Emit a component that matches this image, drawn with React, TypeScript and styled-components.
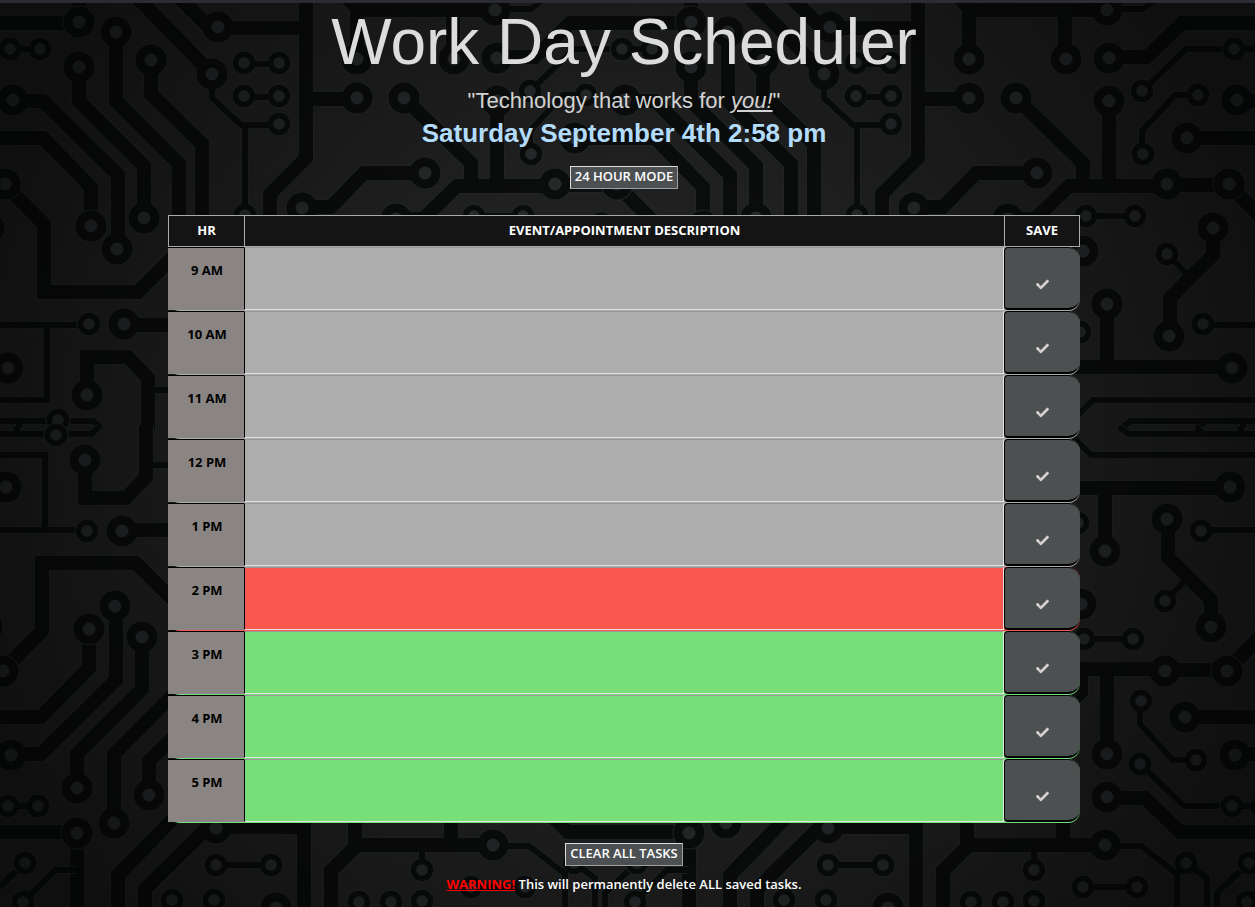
import React, { useState } from "react";
import styled, { createGlobalStyle } from "styled-components";
import { FaCheck } from "react-icons/fa";

const GlobalStyle = createGlobalStyle`
  *, *::before, *::after { box-sizing: border-box; }
  body {
    margin: 0;
    background: #141515;
    color: #ffffff;
    font-family: "Open Sans", "Noto Sans", sans-serif;
  }
`;

/* ---------- circuit board backdrop ---------- */

const TILE = 612;

const thickTraces = [
  "M497,57 H535 L570,23 H691 V-60",
  "M116,32 V101 L179,164 V250",
  "M79,67 V101 L144,166 V218",
  "M151,60 V94 L202,144 V250",
  "M13,101 H43 L118,175 V249",
  "M575,138 H655 L703,187 V226",
  "M555,185 H617 L656,224 V292 H750 L790,252",
  "M212,74 L120,-20 V-60",
  "M147,-60 V-34 L206,24 L218,28 H306",
  "M306,-60 V158 L270,194 V250",
  "M306,99 H357",
  "M333,-60 V-16 L359,10 H494",
  "M357,10 V59",
  "M453,10 V59",
  "M404,98 L471,163 V186",
  "M497,101 V186",
  "M420,222 L457,186 H555",
  "M425,173 H364 L331,207 H302",
  "M396,219 H424",
  "M601,228 V255 L558,298 V336",
  "M440,367 H620",
  "M495,304 V367",
  "M124,325 H200",
  "M87,395 V357 H128 L148,378 V430",
];

const thinTraces = [
  "M10,49 H40",
  "M530,91 L574,49 H622",
  "M244,64 H279",
  "M244,97 H279",
  "M212,80 V98 L241,125 H279",
  "M245,125 V215",
  "M424,10 V-15",
  "M494,9 H531 L567,-19 V-60",
  "M474,-32 H527",
  "M576,-8 L597,-23 V-60",
  "M639,-8 L607,-38 V-60",
  "M25,-47 L57,-15 H79",
  "M218,-10 H273",
  "M586,95 H563 L530,131 V154",
  "M475,216 H524",
  "M555,254 L580,279",
  "M455,426 L481,400 H659 V325",
  "M591,325 H701",
  "M509,428 L519,421 H705 L713,428",
  "M631,420 V428",
  "M586,428 L594,421",
  "M148,390 H200",
];

const bigPads: [number, number][] = [
  [79, 22], [116, 32], [79, 67], [151, 60], [13, 100], [144, 218], [117, 249],
  [91, 226], [5, 184], [212, 74], [218, 27], [357, 59], [454, 59], [357, 98],
  [404, 98], [495, 10], [497, 58], [497, 101], [425, 173], [302, 208], [396, 219],
  [555, 184], [575, 138], [601, 228], [471, 251], [495, 304], [557, 336],
  [620, 368], [124, 324], [87, 395], [278, -53],
];

const smallPads: [number, number][] = [
  [10, 49], [40, 49], [244, 63], [279, 63], [244, 96], [279, 96], [279, 124],
  [245, 215], [530, 91], [586, 95], [531, 154], [474, 216], [523, 216],
  [555, 254], [468, 332], [591, 324], [89, 324], [58, 420], [424, -15],
  [361, -47], [393, -47], [424, -46], [473, -32], [527, -32], [576, -8],
  [27, -8], [25, -47], [218, -10], [273, -10], [174, -45], [216, -45],
];

const EDGE = "#1e2828";
const COPPER = "#0b0c0c";
const HOLE = "#272b2c";

const BackdropSvg = styled.svg`
  grid-area: 1 / 1;
  display: block;
  width: 100%;
  height: 0;
  min-height: 100%;
`;

function Backdrop() {
  return (
    <BackdropSvg aria-hidden="true">
      <defs>
        <g id="half-board" fill="none">
          <g stroke={EDGE}>
            {thickTraces.map((d) => <path key={d} d={d} strokeWidth="16" />)}
            {thinTraces.map((d) => <path key={d} d={d} strokeWidth="8" />)}
            {bigPads.map(([x, y]) => <circle key={`${x},${y}`} cx={x} cy={y} r="11" strokeWidth="11" />)}
            {smallPads.map(([x, y]) => <circle key={`${x},${y}`} cx={x} cy={y} r="9" strokeWidth="7" />)}
          </g>
          <g stroke={COPPER}>
            {thickTraces.map((d) => <path key={d} d={d} strokeWidth="14" />)}
            {thinTraces.map((d) => <path key={d} d={d} strokeWidth="6" />)}
            {bigPads.map(([x, y]) => <circle key={`${x},${y}`} cx={x} cy={y} r="11" strokeWidth="9" fill={HOLE} />)}
            {smallPads.map(([x, y]) => <circle key={`${x},${y}`} cx={x} cy={y} r="8.5" strokeWidth="5.5" fill={HOLE} />)}
          </g>
        </g>
        <g id="board">
          <use href="#half-board" />
          <use href="#half-board" transform="translate(-2 855) scale(1 -1)" />
        </g>
        <pattern id="circuit" x="0" y="-55" width={TILE} height="960" patternUnits="userSpaceOnUse" viewBox={`0 -52 ${TILE} 960`}>
          <rect y="-52" width={TILE} height="960" fill="#212121" />
          <use href="#board" x={-TILE} />
          <use href="#board" />
          <use href="#board" x={TILE} />
        </pattern>
        <radialGradient
          id="vignette"
          cx="0.5"
          cy="0.5"
          r="0.5"
          gradientTransform="translate(-0.04 -0.3) scale(1.08 1.6)"
        >
          <stop offset="0" stopColor="#000" stopOpacity="0" />
          <stop offset="0.4" stopColor="#000" stopOpacity="0.04" />
          <stop offset="1" stopColor="#000" stopOpacity="0.54" />
        </radialGradient>
      </defs>
      <rect width="100%" height="100%" fill="url(#circuit)" />
      <rect width="100%" height="100%" fill="url(#vignette)" />
    </BackdropSvg>
  );
}

/* ---------- page ---------- */

const Page = styled.div`
  display: grid;
  grid-template-columns: minmax(0, 1fr);
  min-height: 100vh;
  border-top: 3px solid #2b2a35;
`;

const Content = styled.div`
  grid-area: 1 / 1;
  display: flex;
  flex-direction: column;
  align-items: center;
  padding: 0 7px 12px 0;
`;

const Header = styled.header`
  display: flex;
  flex-direction: column;
  align-items: center;
  text-align: center;
  font-family: "Liberation Sans", Arial, sans-serif;
`;

const Title = styled.h1`
  margin: 0;
  font-size: 64px;
  font-weight: 400;
  line-height: 78px;
  color: #dcdcdc;
`;

const Tagline = styled.p`
  margin: 0;
  font-size: 22px;
  line-height: 40px;
  color: #d3d3d3;
`;

const Emphasis = styled.em`
  text-decoration: underline;
`;

const Clock = styled.p`
  margin: 0 0 21px;
  font-size: 26px;
  font-weight: 700;
  line-height: 24px;
  color: #b3dcfa;
`;

const ActionButton = styled.button`
  height: 23px;
  padding: 0 4px 2px;
  border: 1px solid;
  border-color: #dcdcdc #a0a0a0 #a0a0a0 #dcdcdc;
  background: #4c5052;
  color: #ffffff;
  font-family: "Open Sans", "Noto Sans", sans-serif;
  font-size: 13px;
  font-weight: 600;
  line-height: 19px;
  cursor: pointer;
`;

const Schedule = styled.table`
  display: block;
  width: 100%;
  max-width: 912px;
  margin: 26px 0 20px;
  font-size: 13px;
  font-weight: 700;
`;

const Head = styled.thead`
  display: block;
`;

const Body = styled.tbody`
  display: block;
`;

const HeadRow = styled.tr`
  display: grid;
  grid-template-columns: 1fr 10fr 1fr;
  height: 32px;
  background: #141414;
`;

const HeadCell = styled.th`
  padding: 0;
  border: 1px solid #a9aba9;
  border-right-width: 0;
  line-height: 29px;
  text-align: center;

  &:last-child {
    border-right-width: 1px;
  }
`;

type Phase = "past" | "present" | "future";

const phaseColor: Record<Phase, string> = {
  past: "#adadad",
  present: "#fa584f",
  future: "#78de78",
};

const SlotRow = styled.tr<{ $phase: Phase }>`
  display: grid;
  grid-template-columns: 1fr 10fr 1fr;
  grid-template-rows: 63px;
  height: 64px;
  border-radius: 12px;
  background: ${({ $phase }) => phaseColor[$phase]};
`;

const HourCell = styled.th`
  padding: 13px 0 0 2px;
  border-top: 1px solid #000000;
  background: #8a8583;
  color: #000000;
  line-height: 18px;
  text-align: center;
`;

const Cell = styled.td`
  display: flex;
  padding: 0;
`;

const TaskInput = styled.textarea<{ $phase: Phase }>`
  flex: 1;
  min-width: 0;
  padding: 4px 8px;
  border: 1px solid;
  border-color: #989898 #e4e4e4 #e4e4e4 #000000;
  border-radius: 0;
  background: ${({ $phase }) => phaseColor[$phase]};
  color: #000000;
  font: inherit;
  resize: none;
`;

const SaveButton = styled.button`
  display: flex;
  flex: 1;
  align-items: center;
  justify-content: center;
  padding: 12px 0 0;
  border: 1px solid #000000;
  border-width: 1px 0 2px 1px;
  border-radius: 4px 12px 12px 4px;
  background: #4c5050;
  color: #d8d0d0;
  font-size: 13px;
  cursor: pointer;
`;

const Notice = styled.p`
  margin: 8px 0 0;
  font-size: 13px;
  font-weight: 600;
  line-height: 20px;
`;

const Alert = styled.strong`
  font-weight: 700;
  color: #ff0000;
  text-decoration: underline;
`;

const slots: { hour: number; phase: Phase }[] = [
  { hour: 9, phase: "past" },
  { hour: 10, phase: "past" },
  { hour: 11, phase: "past" },
  { hour: 12, phase: "past" },
  { hour: 13, phase: "past" },
  { hour: 14, phase: "present" },
  { hour: 15, phase: "future" },
  { hour: 16, phase: "future" },
  { hour: 17, phase: "future" },
];

function hourLabel(hour: number, military: boolean) {
  if (military) return `${hour}:00`;
  return `${hour > 12 ? hour - 12 : hour} ${hour < 12 ? "AM" : "PM"}`;
}

export default function App() {
  const [military, setMilitary] = useState(false);
  const [tasks, setTasks] = useState<Record<number, string>>({});

  return (
    <>
      <GlobalStyle />
      <Page>
        <Backdrop />
        <Content>
          <Header>
            <Title>Work Day Scheduler</Title>
            <Tagline>"Technology that works for <Emphasis>you!</Emphasis>"</Tagline>
            <Clock>Saturday September 4th {military ? "14:58" : "2:58 pm"}</Clock>
            <ActionButton type="button" onClick={() => setMilitary(!military)}>
              {military ? "12" : "24"} HOUR MODE
            </ActionButton>
          </Header>
          <Schedule>
            <Head>
              <HeadRow>
                <HeadCell scope="col">HR</HeadCell>
                <HeadCell scope="col">EVENT/APPOINTMENT DESCRIPTION</HeadCell>
                <HeadCell scope="col">SAVE</HeadCell>
              </HeadRow>
            </Head>
            <Body>
              {slots.map(({ hour, phase }) => (
                <SlotRow key={hour} $phase={phase}>
                  <HourCell scope="row" id={`hour-${hour}`}>{hourLabel(hour, military)}</HourCell>
                  <Cell>
                    <TaskInput
                      $phase={phase}
                      aria-labelledby={`hour-${hour}`}
                      value={tasks[hour] ?? ""}
                      onChange={(e) => setTasks({ ...tasks, [hour]: e.target.value })}
                    />
                  </Cell>
                  <Cell>
                    <SaveButton type="button" aria-label={`Save ${hourLabel(hour, military)}`}>
                      <FaCheck />
                    </SaveButton>
                  </Cell>
                </SlotRow>
              ))}
            </Body>
          </Schedule>
          <ActionButton type="button" onClick={() => setTasks({})}>CLEAR ALL TASKS</ActionButton>
          <Notice>
            <Alert>WARNING!</Alert> This will permanently delete ALL saved tasks.
          </Notice>
        </Content>
      </Page>
    </>
  );
}
